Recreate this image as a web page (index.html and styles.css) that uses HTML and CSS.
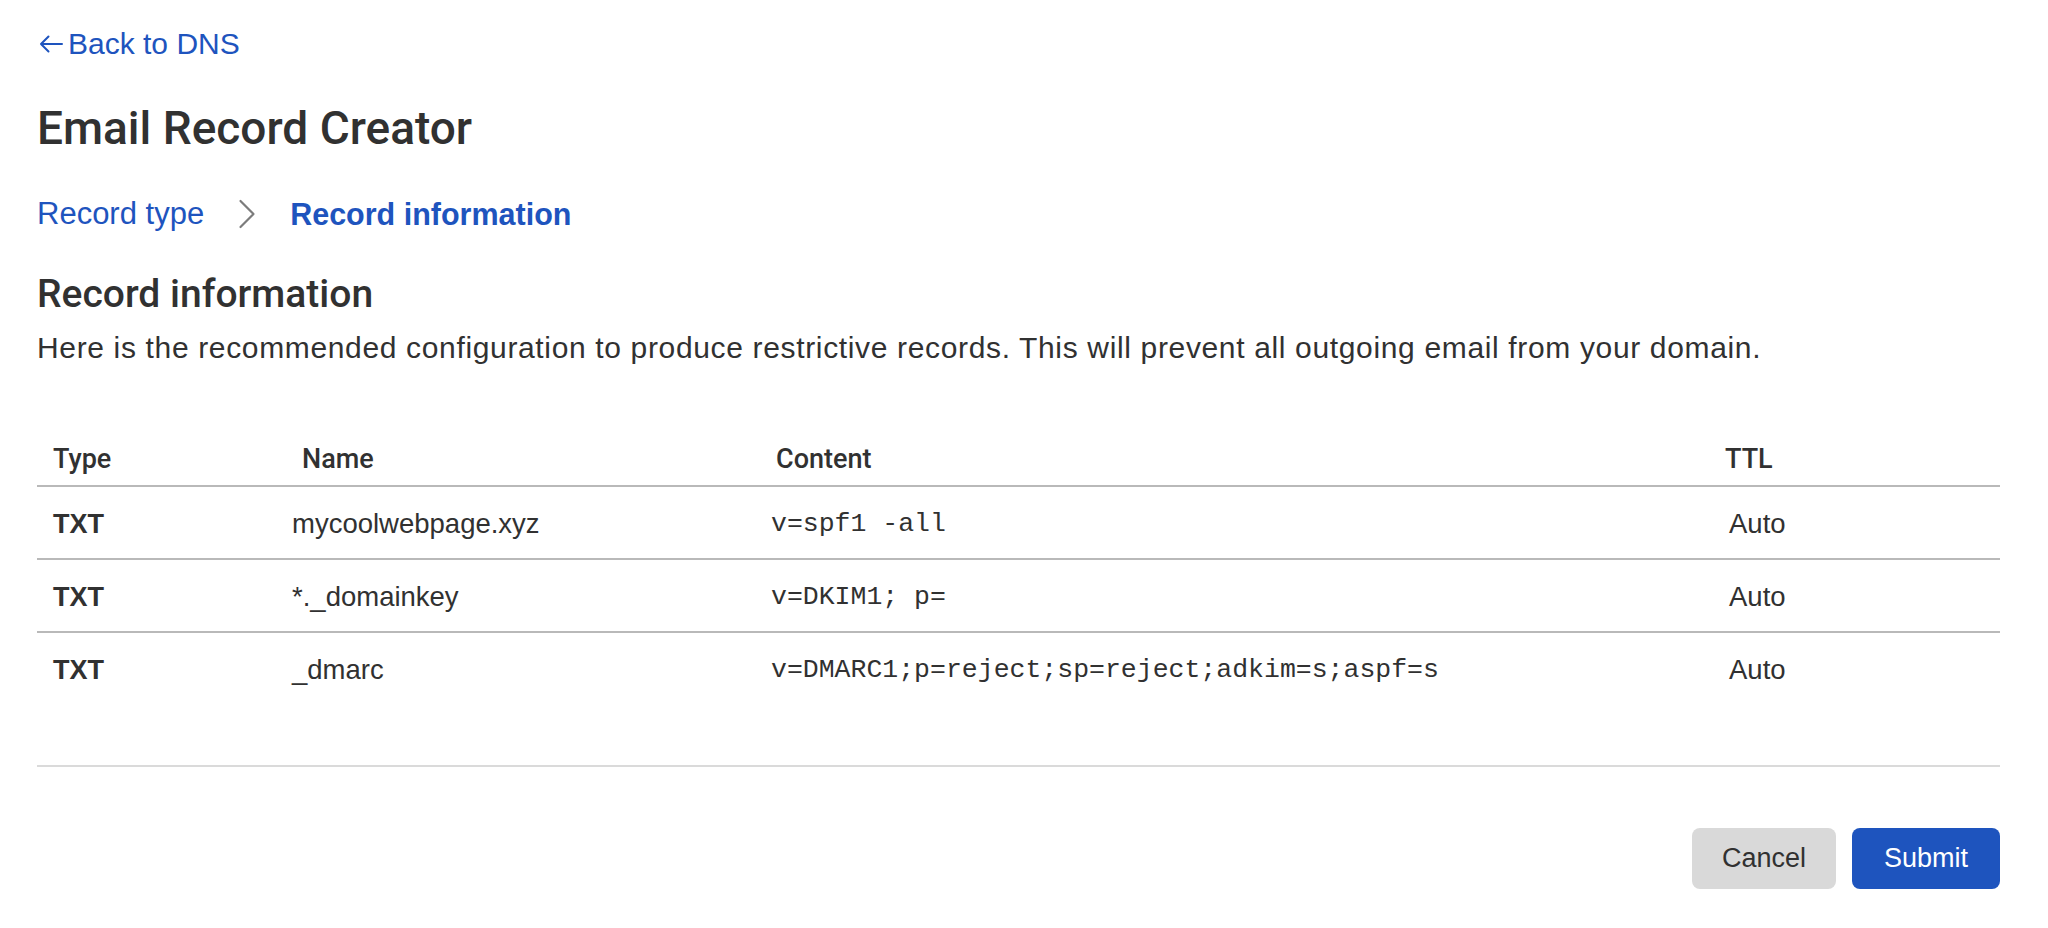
FILE: index.html
```html
<!DOCTYPE html>
<html lang="en">
<head>
<meta charset="utf-8">
<title>Email Record Creator</title>
<link rel="stylesheet" href="styles.css">
</head>
<body>
<main class="page">
  <a class="back-link" href="#">
    <svg class="back-arrow" width="24" height="18" viewBox="0 0 24 18" aria-hidden="true">
      <path d="M23 9H2M9.5 1.5L2 9l7.5 7.5" fill="none" stroke="currentColor" stroke-width="2" stroke-linecap="round" stroke-linejoin="round"/>
    </svg>
    <span>Back to DNS</span>
  </a>

  <h1 class="title">Email Record Creator</h1>

  <nav class="steps">
    <a class="step" href="#">Record type</a>
    <svg class="step-chevron" width="18" height="30" viewBox="0 0 18 30" aria-hidden="true">
      <path d="M2.5 2L15.5 15L2.5 28" fill="none" stroke="#7c7c7c" stroke-width="2.2" stroke-linecap="round" stroke-linejoin="round"/>
    </svg>
    <span class="step step-current">Record information</span>
  </nav>

  <h2 class="section-title">Record information</h2>
  <p class="section-desc">Here is the recommended configuration to produce restrictive records. This will prevent all outgoing email from your domain.</p>

  <div class="records">
    <table class="records-table">
      <colgroup>
        <col class="col-type">
        <col class="col-name">
        <col class="col-content">
        <col class="col-ttl">
      </colgroup>
      <thead>
        <tr>
          <th>Type</th>
          <th class="th-name">Name</th>
          <th class="th-content">Content</th>
          <th class="th-ttl">TTL</th>
        </tr>
      </thead>
      <tbody>
        <tr>
          <td class="cell-type">TXT</td>
          <td>mycoolwebpage.xyz</td>
          <td class="cell-mono">v=spf1 -all</td>
          <td>Auto</td>
        </tr>
        <tr>
          <td class="cell-type">TXT</td>
          <td>*._domainkey</td>
          <td class="cell-mono">v=DKIM1; p=</td>
          <td>Auto</td>
        </tr>
        <tr>
          <td class="cell-type">TXT</td>
          <td>_dmarc</td>
          <td class="cell-mono">v=DMARC1;p=reject;sp=reject;adkim=s;aspf=s</td>
          <td>Auto</td>
        </tr>
      </tbody>
    </table>
  </div>

  <div class="actions">
    <button class="btn btn-secondary" type="button">Cancel</button>
    <button class="btn btn-primary" type="button">Submit</button>
  </div>
</main>
</body>
</html>
```

FILE: styles.css
```css
* {
  box-sizing: border-box;
}

html, body {
  margin: 0;
  padding: 0;
  background: #ffffff;
}

body {
  font-family: "Liberation Sans", Arial, sans-serif;
  color: #313131;
}

.page {
  padding: 26px 48px 0 37px;
}

.back-link {
  display: inline-flex;
  align-items: center;
  gap: 5px;
  margin-left: 2px;
  font-size: 30px;
  line-height: 36px;
  color: #1e54be;
  text-decoration: none;
}

.back-arrow {
  display: block;
  flex: none;
}

.title {
  margin: 39px 0 0;
  font-family: Roboto, "Liberation Sans", Arial, sans-serif;
  font-size: 46px;
  line-height: 54px;
  font-weight: 500;
  color: #313131;
}

.steps {
  display: flex;
  align-items: center;
  margin-top: 41px;
  font-size: 31px;
  line-height: 36px;
}

.step {
  color: #1e54be;
  text-decoration: none;
}

.step-current {
  font-size: 30.5px;
  font-weight: 700;
}

.step-chevron {
  display: block;
  flex: none;
  margin: 0 34px 0 34px;
}

.section-title {
  margin: 38px 0 0;
  font-family: Roboto, "Liberation Sans", Arial, sans-serif;
  font-size: 39px;
  line-height: 48px;
  font-weight: 500;
  color: #313131;
}

.section-desc {
  margin: 12px 0 0;
  font-size: 30px;
  line-height: 36px;
  letter-spacing: 0.65px;
  color: #313131;
}

.records {
  margin-top: 65px;
  padding-bottom: 61px;
  border-bottom: 2px solid #dadada;
}

.records-table {
  width: 100%;
  table-layout: fixed;
  border-collapse: collapse;
  font-size: 27.5px;
  line-height: 32px;
}

.col-type { width: 239px; }
.col-name { width: 479px; }
.col-content { width: 958px; }
.col-ttl { width: auto; }

.records-table th {
  padding: 12px 0 10px 16px;
  text-align: left;
  font-family: Roboto, "Liberation Sans", Arial, sans-serif;
  font-size: 27px;
  font-weight: 500;
  color: #313131;
  border-bottom: 2px solid #b9b9b9;
}

.records-table th.th-name { padding-left: 26px; }
.records-table th.th-content { padding-left: 21px; }
.records-table th.th-ttl { padding-left: 12px; }

.records-table td {
  padding: 21px 0 18px 16px;
  text-align: left;
  color: #313131;
  white-space: nowrap;
}

.records-table tbody tr + tr td {
  border-top: 2px solid #b9b9b9;
}

.cell-type {
  font-size: 27px;
  font-weight: 700;
}

.cell-mono {
  font-family: "Liberation Mono", "Courier New", monospace;
  font-size: 26.5px;
}

.actions {
  display: flex;
  justify-content: flex-end;
  gap: 16px;
  margin-top: 61px;
}

.btn {
  height: 61px;
  border: 0;
  border-radius: 8px;
  font-family: "Liberation Sans", Arial, sans-serif;
  font-size: 27px;
  line-height: 61px;
  cursor: pointer;
}

.btn-secondary {
  background: #d9d9d9;
  color: #313131;
  padding: 0 30px;
}

.btn-primary {
  background: #1e54be;
  color: #ffffff;
  padding: 0 32px;
}
```
